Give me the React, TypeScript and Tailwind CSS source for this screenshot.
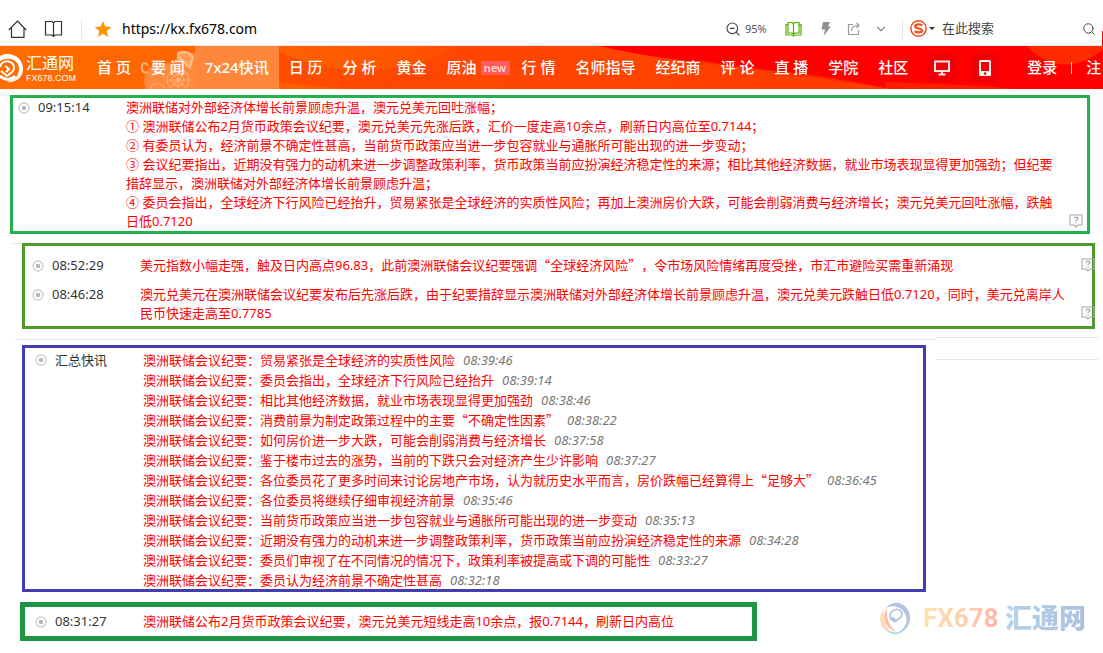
import { clsx } from "clsx";
import { LuChevronDown, LuSearch, LuZoomOut } from "react-icons/lu";

interface NewsRowProps {
  label: string;
  className?: string;
  children: React.ReactNode;
}

const navItems = [
  { label: "首 页" },
  { label: "要 闻" },
  { label: "7x24快讯", active: true },
  { label: "日 历" },
  { label: "分 析" },
  { label: "黄金" },
  { label: "原油", isNew: true },
  { label: "行 情" },
  { label: "名师指导" },
  { label: "经纪商" },
  { label: "评 论" },
  { label: "直 播" },
  { label: "学院" },
  { label: "社区" },
];

const reportLines = [
  "澳洲联储对外部经济体增长前景顾虑升温，澳元兑美元回吐涨幅；",
  "① 澳洲联储公布2月货币政策会议纪要，澳元兑美元先涨后跌，汇价一度走高10余点，刷新日内高位至0.7144；",
  "② 有委员认为，经济前景不确定性甚高，当前货币政策应当进一步包容就业与通胀所可能出现的进一步变动；",
  "③ 会议纪要指出，近期没有强力的动机来进一步调整政策利率，货币政策当前应扮演经济稳定性的来源；相比其他经济数据，就业市场表现显得更加强劲；但纪要",
  "措辞显示，澳洲联储对外部经济体增长前景顾虑升温；",
  "④ 委员会指出，全球经济下行风险已经抬升，贸易紧张是全球经济的实质性风险；再加上澳洲房价大跌，可能会削弱消费与经济增长；澳元兑美元回吐涨幅，跌触",
  "日低0.7120",
];

const summary = [
  { text: "贸易紧张是全球经济的实质性风险", time: "08:39:46" },
  { text: "委员会指出，全球经济下行风险已经抬升", time: "08:39:14" },
  { text: "相比其他经济数据，就业市场表现显得更加强劲", time: "08:38:46" },
  { text: "消费前景为制定政策过程中的主要“不确定性因素”", time: "08:38:22" },
  { text: "如何房价进一步大跌，可能会削弱消费与经济增长", time: "08:37:58" },
  { text: "鉴于楼市过去的涨势，当前的下跌只会对经济产生少许影响", time: "08:37:27" },
  {
    text: "各位委员花了更多时间来讨论房地产市场，认为就历史水平而言，房价跌幅已经算得上“足够大”",
    time: "08:36:45",
  },
  { text: "各位委员将继续仔细审视经济前景", time: "08:35:46" },
  { text: "当前货币政策应当进一步包容就业与通胀所可能出现的进一步变动", time: "08:35:13" },
  {
    text: "近期没有强力的动机来进一步调整政策利率，货币政策当前应扮演经济稳定性的来源",
    time: "08:34:28",
  },
  { text: "委员们审视了在不同情况的情况下，政策利率被提高或下调的可能性", time: "08:33:27" },
  { text: "委员认为经济前景不确定性甚高", time: "08:32:18" },
];

// Curly quotes need the CJK face to get their full width
const QuotedText = ({ text }: { text: string }) => (
  <>
    {text.split(/([“”])/).map((part, i) =>
      part === "“" || part === "”" ? (
        <span key={i} className="font-['Noto_Sans_CJK_SC',sans-serif] leading-none">
          {part}
        </span>
      ) : (
        part
      )
    )}
  </>
);

const Bullet = () => (
  <svg className="mt-1 size-3 shrink-0" viewBox="0 0 12 12" fill="none">
    <circle cx="6" cy="6" r="5" stroke="#cfcdc8" strokeWidth="1.3" />
    <circle cx="6" cy="6" r="2.3" fill="#bab8b3" />
  </svg>
);

const HelpButton = () => (
  <button aria-label="?" className="mb-[3px] shrink-0 self-end cursor-pointer">
    <svg width="14" height="14" viewBox="0 0 14 14" fill="none" stroke="#a8a69f">
      <path d="M1 1h12v10H9L7 13l-2-2H1z" strokeWidth="1.1" />
      <path d="M5.200 4.600c0-2 3.600-2 3.600 0 0 1.200-1.800 1.200-1.800 2.600M7 8.200v1.300" strokeWidth="1.3" />
    </svg>
  </button>
);

const NewsRow = (props: NewsRowProps) => {
  const { label, className, children } = props;

  return (
    <div className={clsx("flex items-start", className)}>
      <Bullet />
      <span className="ml-2 w-[88px] shrink-0 text-[#333]">{label}</span>
      {children}
    </div>
  );
};

const BrowserBar = () => (
  <div className="relative flex h-[46px] items-center border-b border-gray-200 pt-3 pl-2">
    <button aria-label="home">
      <svg width="20" height="20" viewBox="0 0 20 20" fill="none" stroke="#333" strokeWidth="1.2">
        <path d="M.8 11 9.500 2l8.700 9M3.500 9v9.400h12.500V9" />
      </svg>
    </button>
    <button aria-label="book" className="ml-4">
      <svg width="20" height="20" viewBox="0 0 20 20" fill="none" stroke="#333" strokeWidth="1.2">
        <path d="M1.500 2.500H8L9.500 4 11 2.500h6.500v13.500H11l-1.500 1.500L8 16H1.500zM9.500 4v14" />
      </svg>
    </button>
    <span className="ml-[17px] h-5 w-px bg-gray-200" />
    <svg className="ml-3 size-[18px]" viewBox="0 0 18 18" fill="#ff9500">
      <path d="m9 1 2.300 5.500 6 .5-4.500 4 1.300 6L9 13.800 3.900 17l1.300-6L.7 7l6-.5z" />
    </svg>
    <input
      aria-label="url"
      className="ml-[10px] min-w-0 flex-1 text-[14px] text-black outline-none"
      defaultValue="https://kx.fx678.com"
    />
    <LuZoomOut size={16} className="text-[#444]" strokeWidth={1.7} />
    <span className="ml-1 w-[40px] text-[11px] text-[#555]">95%</span>
    <button aria-label="reader">
      <svg width="17" height="16" viewBox="0 0 17 16" fill="none" stroke="#52b000" strokeWidth="1.2">
        <path d="M3 3.500H1v10.500h6l1.500 1 1.500-1h6V3.500h-2" />
        <path d="M3 1.500h4L8.500 3 10 1.500h4v10.500h-4l-1.500 1.200L7 12H3zM8.500 3v10" />
      </svg>
    </button>
    <svg className="ml-4 size-4" viewBox="0 0 16 16" fill="#8f8f8f">
      <path d="M5 1h7L10 5.500h3L5.500 15 7 8.500H3.500z" />
    </svg>
    <svg className="ml-[13px] size-[14px]" viewBox="0 0 14 14" fill="none" stroke="#999" strokeWidth="1.2">
      <path d="M6 2.500H1.500v10h10V8M4.500 9c0-4 2-5.500 7-5.500M9.500 1l2.500 2.500L9.500 6" />
    </svg>
    <LuChevronDown size={14} className="ml-[13px] text-[#888]" />
    <span className="ml-[14px] h-5 w-px bg-gray-200" />
    <svg className="ml-[7px] size-[17px]" viewBox="0 0 16 16" fill="none" stroke="#f4511e">
      <circle cx="8" cy="8" r="7.200" strokeWidth="1.400" />
      <path d="M11.500 5.200C9 3.600 4.800 4 4.800 6.200c0 2.400 6.600 1.200 6.600 3.700 0 2.100-4.400 2.300-7 .7" strokeWidth="2.100" />
    </svg>
    <svg className="ml-[2px] size-[6px]" viewBox="0 0 6 6" fill="#333">
      <path d="M0 1h6L3 4z" />
    </svg>
    <input
      aria-label="search"
      className="ml-[7px] w-[140px] text-[13px] placeholder:text-[#444] outline-none"
      placeholder="在此搜索"
    />
    <LuSearch size={14} className="mr-[7px] text-[#444]" strokeWidth={1.7} />
    <span className="absolute right-0 top-[31px] h-[15px] w-px bg-red-600" />
  </div>
);

const NavBackground = () => (
  <svg
    className="absolute inset-0 size-full"
    viewBox="0 0 1103 43"
    preserveAspectRatio="none"
  >
    <defs>
      <linearGradient id="nav" x1="0" x2="1">
        <stop offset="0" stopColor="#ff6c00" />
        <stop offset=".25" stopColor="#ff6200" />
        <stop offset=".45" stopColor="#ff4a00" />
        <stop offset=".65" stopColor="#ff2c00" />
        <stop offset=".8" stopColor="#ff0a00" />
        <stop offset="1" stopColor="#ff0000" />
      </linearGradient>
    </defs>
    <rect width="1103" height="43" fill="url(#nav)" />
    <path d="M279 5c40 20 80 22 115 17 30-5 50-14 62-22h90C480 40 360 50 279 36z" fill="#ff4100" opacity=".6" />
    <path d="M340 36c70-6 130-14 200-36h110c60 22 160 30 240 43H340z" fill="#ff4600" opacity=".8" />
    <path d="M600 0h503v43H890C810 22 690 22 600 0z" fill="#ff0000" />
    <path d="M700 14c60 12 120 14 190 29H700z" fill="#ff3e00" opacity=".6" />
    <path d="M885 36c60 2 90 3 130 7H885z" fill="#ff3a00" opacity=".5" />
    <path d="M1027 0c20 22 50 26 76 3V0z" fill="#ff2a00" />
  </svg>
);

const Pig = () => (
  <svg
    className="absolute left-[140px] top-[4px] h-[39px] w-[56px]"
    viewBox="0 0 56 39"
    fill="none"
    stroke="#ffb27a"
  >
    <path d="M6 39C2 29 5 20 12 16l1-4c12 4 21 1 25-6l-1-4c6-2 12 0 17 1l2 2v34z" fill="#ff8a3c" stroke="none" />
    <path d="M8 22c-5 2-7-2-6-7 2-3 5-2 6 1" strokeWidth="2" />
    <path d="M38 3c7-3 12 0 15 4l-3 11c-4-2-6-8-12-10z" fill="#ffa766" stroke="#ffc690" strokeWidth="1.500" />
    <path d="M42 6l6 5M46 4l4 6" stroke="#ff7a28" />
    <circle cx="38" cy="30" r="11" />
    <circle cx="38" cy="30" r="6" />
    <circle cx="38" cy="30" r="2" />
    <path d="M38 19v22M27 30h22M30 22l16 16M46 22 30 38M12 28a6 6 0 0 1 12 0M10 39a8 8 0 0 1 15 0" />
  </svg>
);

const SiteNav = () => (
  <header className="relative flex h-[43px] items-center overflow-hidden whitespace-nowrap text-[15px] font-medium text-white">
    <NavBackground />
    <Pig />
    <a href="#" className="relative flex w-[87px] shrink-0 items-center">
      <svg width="23" height="30" viewBox="0 0 23 30" fill="none" stroke="#fff">
        <path
          d="M0 3C9-2 23 3 23 16 23 25 15 30 6 29 14 28 19 23 19 16 19 7 9 3 0 8z"
          fill="#fff"
          stroke="none"
        />
        <path d="M0 23c4 4 11 5 15 0" strokeWidth="3" />
        <path d="M0 14c1-5 6-7 10-5 5 2 5 7 2 10l-5 4-6-5M5 13l4 3-3 3" strokeWidth="2" />
      </svg>
      <span className="ml-[3px] flex flex-col font-normal">
        <span className="text-[16px] leading-5">汇通网</span>
        <span className="font-['Liberation_Sans',sans-serif] text-[9px] leading-[10px]">FX678.COM</span>
      </span>
    </a>
    <nav className="relative flex h-full items-center">
      {navItems.map((item) => (
        <a
          key={item.label}
          href="#"
          className={clsx(
            "flex h-full items-center pl-[10px]",
            item.active && "bg-[#ff873c]",
            item.isNew ? "pr-[2px]" : "pr-[10px]"
          )}
        >
          {item.label}
          {item.isNew && (
            <span className="ml-1 h-[14px] w-[29px] bg-[#ff5c5c] text-center text-[11px] leading-[13px] font-semibold text-[#ffd9d0]">
              new
            </span>
          )}
        </a>
      ))}
    </nav>
    <div className="relative ml-[10px] flex items-center">
      <button aria-label="desktop" className="flex size-7 items-center justify-center rounded-xs bg-[#ee0008]">
        <svg width="16" height="16" viewBox="0 0 16 16" fill="none" stroke="#ffe5e5">
          <path d="M1 1.500h14v9.500H1z" strokeWidth="2" />
          <path d="M8 11v3M4.500 14.500h7" strokeWidth="2" />
        </svg>
      </button>
      <button aria-label="mobile" className="ml-[15px] flex size-7 items-center justify-center rounded-xs bg-[#ee0008]">
        <svg width="12" height="16" viewBox="0 0 12 16">
          <rect width="12" height="16" rx="1.500" fill="#fff0f0" />
          <path d="M2 2h8v9H2z" fill="#ee0008" />
          <circle cx="6" cy="13.500" r="1.200" fill="#ee0008" />
        </svg>
      </button>
      <a href="#" className="ml-7">登录</a>
      <span className="mx-[14px] h-3 w-px bg-white/80" />
      <a href="#">注</a>
    </div>
  </header>
);

const Watermark = () => (
  <div className="flex h-8 items-center pr-[17px]">
    <svg width="32" height="34" viewBox="0 0 32 34" fill="none">
      <path d="M7 7C16-4 32 4 31 18c-1 9-7 13-12 14 7-5 10-10 8-17C24 6 15 3 7 7z" fill="#b3c3e2" />
      <path d="M5 8C-3 18 2 30 14 33 7 28 3 20 5 8z" fill="#ffdcb0" />
      <path d="M8 7C2 17 6 27 17 31 11 25 7 18 8 7z" fill="#ffbfa6" />
      <path d="M6 26c4 6 13 7 19 3-5 6-14 6-19-3z" fill="#a9d4ea" />
      <path d="M13 16l4 4 5-4c3-5-2-9-7-7-4 2-5 6-3 9l4 3" stroke="#b3c3e2" strokeWidth="1.800" />
    </svg>
    <span className="ml-3 w-[75px] bg-linear-to-r from-[#ffe2b0] via-[#ffd0ac] to-[#ffb5a8] bg-clip-text font-['Roboto',sans-serif] text-[26px] leading-9 font-bold text-transparent">
      FX678
    </span>
    <span className="ml-[7px] bg-linear-to-r from-[#b4d4ea] to-[#b0bedf] bg-clip-text text-[27px] leading-9 font-black text-transparent">
      汇通网
    </span>
  </div>
);

const App = () => {
  return (
    <div className="min-h-screen overflow-hidden bg-white font-['Noto_Sans','Noto_Sans_CJK_SC',sans-serif] text-[13px] leading-[19px] [text-spacing-trim:space-all]">
      <BrowserBar />
      <SiteNav />

      <main className="text-[#ff0000]">
        <section className="mt-[6px] mr-[13px] ml-[10px] border-3 border-[#22b14c] pr-[4px] pl-[5px]">
          <NewsRow label="09:15:14">
            <div className="min-w-0 flex-1">
              {reportLines.map((line) => (
                <p key={line}>{line}</p>
              ))}
            </div>
            <HelpButton />
          </NewsRow>
        </section>

        <div className="mt-[9px] mr-1 ml-3 border-t border-gray-200 pr-1 pl-[10px]">
          <section className="-mt-px border-3 border-[#4e9a2c] pt-[10px] pb-[3px] pl-[7px]">
            <NewsRow label="08:52:29" className="-mr-[3px]">
              <p className="min-w-0 flex-1">
                <QuotedText text="美元指数小幅走强，触及日内高点96.83，此前澳洲联储会议纪要强调“全球经济风险”，令市场风险情绪再度受挫，市汇市避险买需重新涌现" />
              </p>
              <HelpButton />
            </NewsRow>
            <NewsRow label="08:46:28" className="mt-[10px] -mr-[3px]">
              <p className="min-w-0 flex-1">
                澳元兑美元在澳洲联储会议纪要发布后先涨后跌，由于纪要措辞显示澳洲联储对外部经济体增长前景顾虑升温，澳元兑美元跌触日低0.7120，同时，美元兑离岸人
                <br />
                民币快速走高至0.7785
              </p>
              <HelpButton />
            </NewsRow>
          </section>
        </div>

        <div className="mt-2 mr-1 ml-[15px] flex">
          <div className="mt-[2px] flex-1 border-t border-gray-200" />
          <div className="w-[163px] border-t border-gray-200" />
        </div>

        <div className="mt-[5px] mr-[5px] ml-[22px] flex items-start">
          <section className="flex-1 border-3 border-[#443cb3] pt-[2px] pl-[10px] leading-5">
            <NewsRow label="汇总快讯">
              <ul className="-mb-[1px]">
                {summary.map((item) => (
                  <li key={item.time} className="h-5">
                    澳洲联储会议纪要：
                    <QuotedText text={item.text} />
                    <time className="ml-2 text-[#777] italic">{item.time}</time>
                  </li>
                ))}
              </ul>
            </NewsRow>
          </section>
          <div className="mt-[14px] ml-[10px] w-[162px] border-t border-gray-200" />
        </div>

        <div className="mt-[10px] ml-5 flex items-start">
          <section className="mr-[122px] flex-1 border-5 border-[#1c9442] py-[5px] pl-[10px]">
            <NewsRow label="08:31:27">
              <p>澳洲联储公布2月货币政策会议纪要，澳元兑美元短线走高10余点，报0.7144，刷新日内高位</p>
            </NewsRow>
          </section>
          <Watermark />
        </div>
      </main>
    </div>
  );
};

export default App;
